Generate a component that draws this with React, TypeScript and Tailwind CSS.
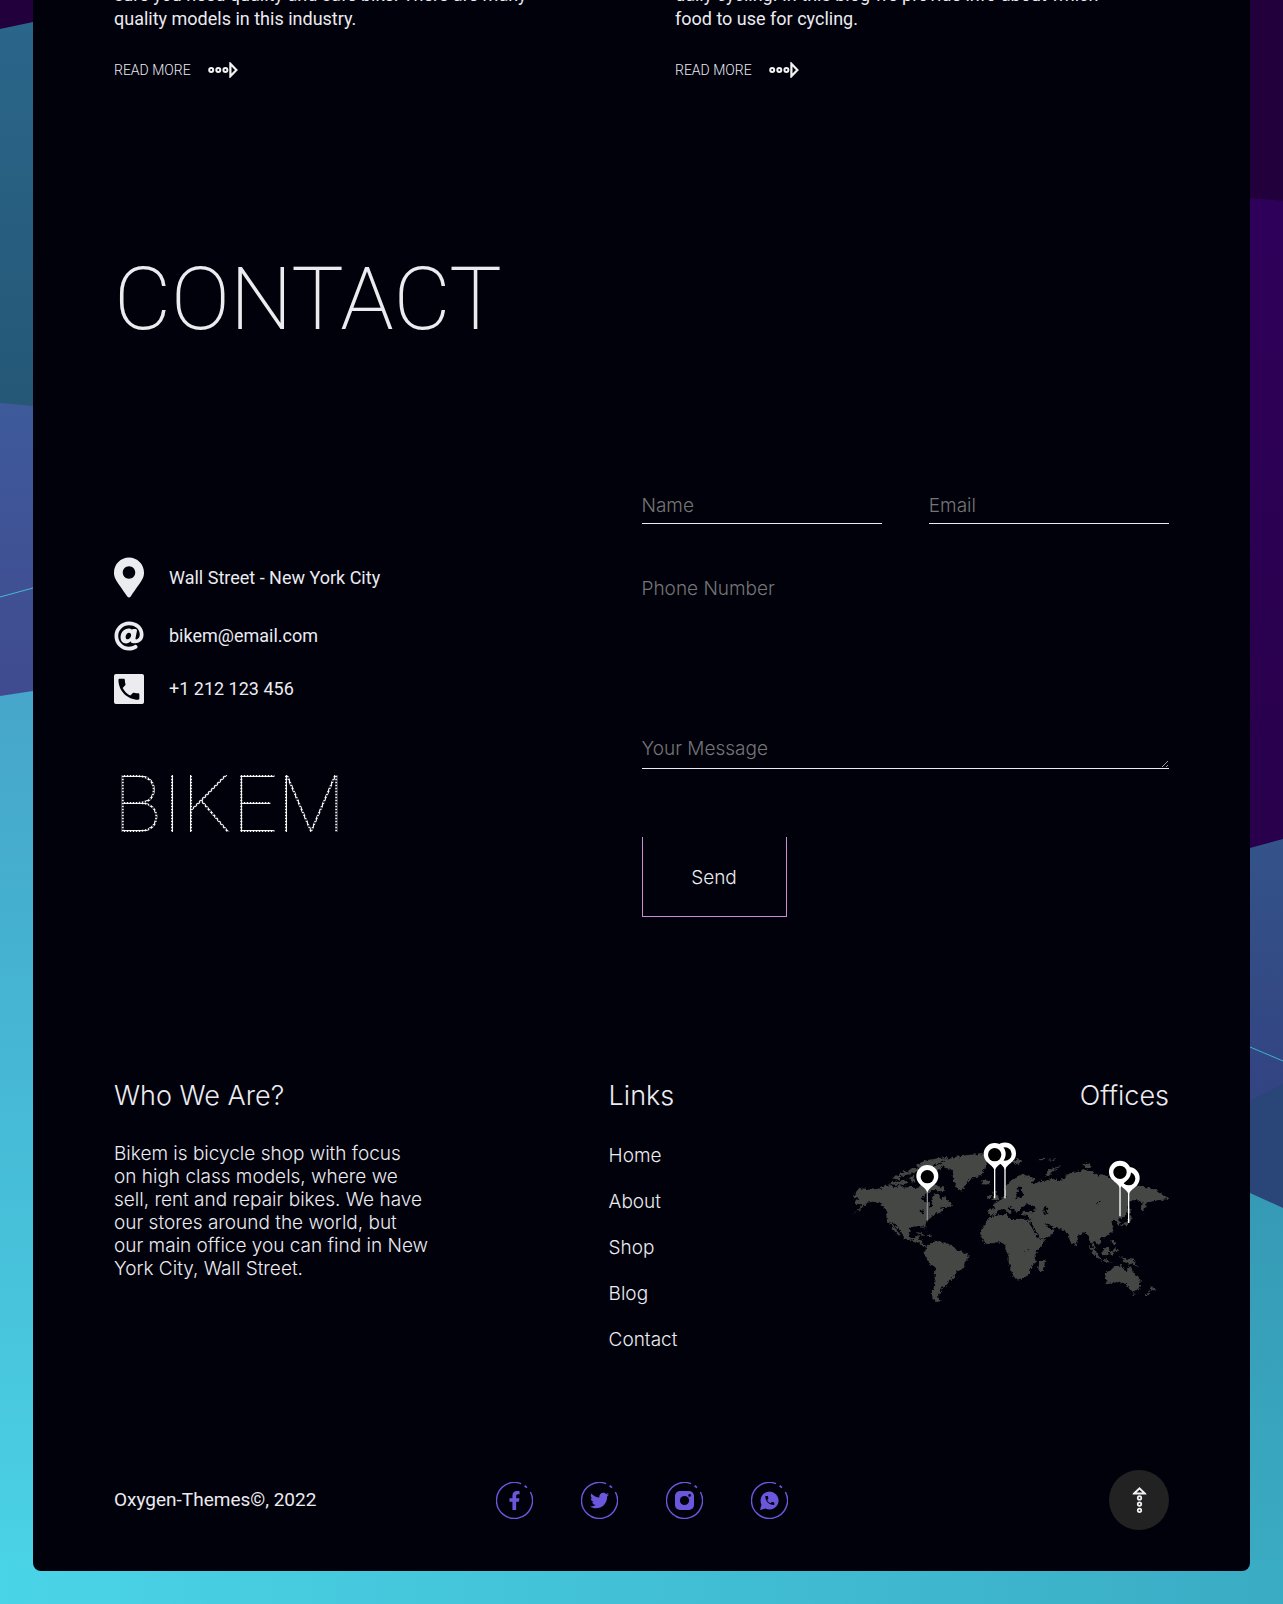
import React from "react";
import { FaAt, FaFacebookF, FaMapMarkerAlt, FaTwitter } from "react-icons/fa";

const HANDSET =
  "M6.62 10.79c1.44 2.83 3.76 5.14 6.59 6.59l2.2-2.2c.27-.27.67-.36 1.02-.24 1.12.37 2.33.57 3.57.57.55 0 1 .45 1 1V20c0 .55-.45 1-1 1-9.39 0-17-7.61-17-17 0-.55.45-1 1-1h3.5c.55 0 1 .45 1 1 0 1.25.2 2.45.57 3.57.11.35.03.74-.25 1.02l-2.2 2.2z";

function Backdrop() {
  return (
    <svg
      className="absolute inset-0 h-full w-full"
      viewBox="0 0 1283 1604"
      preserveAspectRatio="none"
      aria-hidden="true"
    >
      <defs>
        <linearGradient id="teal" x1="0" y1="0" x2="0" y2="1">
          <stop offset="0" stopColor="#2a668a" />
          <stop offset="1" stopColor="#255776" />
        </linearGradient>
        <linearGradient id="indigo" x1="0" y1="0" x2="0" y2="1">
          <stop offset="0" stopColor="#3e5a9a" />
          <stop offset="1" stopColor="#404a8f" />
        </linearGradient>
        <linearGradient id="violet" x1="0" y1="0" x2="0" y2="1">
          <stop offset="0" stopColor="#2f005a" />
          <stop offset="1" stopColor="#28004b" />
        </linearGradient>
        <linearGradient id="blue" x1="0" y1="0" x2="0" y2="1">
          <stop offset="0" stopColor="#34538a" />
          <stop offset="1" stopColor="#324381" />
        </linearGradient>
        <linearGradient id="seaLeft" x1="0" y1="0" x2="0" y2="1">
          <stop offset="0" stopColor="#47a6cb" />
          <stop offset="0.25" stopColor="#45b0d0" />
          <stop offset="1" stopColor="#4ad4e7" />
        </linearGradient>
        <linearGradient id="seaRight" x1="0" y1="0" x2="0" y2="1">
          <stop offset="0" stopColor="#369ab5" />
          <stop offset="1" stopColor="#3aacc4" />
        </linearGradient>
        <linearGradient id="seaFloor" x1="0" y1="0" x2="1" y2="0">
          <stop offset="0" stopColor="#4ad4e7" />
          <stop offset="1" stopColor="#3aacc4" />
        </linearGradient>
      </defs>
      <path d="M0 0H1283V1604H0Z" fill="#21003c" />
      <path d="M0 29L33 22H640V420H0Z" fill="url(#teal)" />
      <path d="M0 403L33 406H640V710H0Z" fill="url(#indigo)" />
      <path d="M0 597L33 588" stroke="#46b8d8" />
      <path d="M0 696L33 691H640V1604H0Z" fill="url(#seaLeft)" />
      <path d="M640 198H1250L1283 201V860H640Z" fill="url(#violet)" />
      <path d="M640 848H1250L1283 839V1110H640Z" fill="url(#blue)" />
      <path d="M1250 1047L1283 1061" stroke="#3fb4cf" />
      <path d="M640 1101H1250L1283 1084V1215H640Z" fill="#2a4577" />
      <path d="M640 1193H1250L1283 1208V1604H640Z" fill="url(#seaRight)" />
      <path d="M0 1560H1283V1604H0Z" fill="url(#seaFloor)" />
    </svg>
  );
}

function BeadArrow({ className }: { className: string }) {
  return (
    <svg viewBox="0 0 30 16" className={className} fill="none" stroke="#f2f2f5" aria-hidden="true">
      <circle cx="3.2" cy="8" r="2" strokeWidth="2" />
      <circle cx="10.3" cy="8" r="2" strokeWidth="2" />
      <circle cx="17.4" cy="8" r="2" strokeWidth="2" />
      <path d="M22.4 1.8L28.4 8L22.4 14.2Z" strokeWidth="2.2" />
    </svg>
  );
}

function Lines({ lines }: { lines: string[] }) {
  return (
    <>
      {lines.map((line) => (
        <span key={line} className="block">
          {line}{" "}
        </span>
      ))}
    </>
  );
}

function BlogTeaser({ lines }: { lines: string[] }) {
  return (
    <article>
      <p className="text-[18px] leading-6">
        <Lines lines={lines} />
      </p>
      <a href="#blog" className="mt-[29px] flex items-center gap-[17px] text-[14px] font-light leading-5">
        READ MORE
        <BeadArrow className="h-4 w-[30px]" />
      </a>
    </article>
  );
}

function Field({ id, label, type, line }: { id: string; label: string; type: string; line: string }) {
  return (
    <div className="min-w-0 flex-1">
      <label htmlFor={id} className="sr-only">
        {label}
      </label>
      <input
        id={id}
        type={type}
        placeholder={label}
        className={`block h-9 w-full border-b bg-transparent font-['Inter'] text-[19px] font-light outline-none placeholder:text-[#757575] ${line}`}
      />
    </div>
  );
}

function SocialRing({ label, children }: { label: string; children: React.ReactNode }) {
  return (
    <a href="#social" aria-label={label}>
      <svg viewBox="0 0 37 37" className="size-[37px] text-[#6a57dc]" aria-hidden="true">
        <g fill="none" stroke="currentColor" strokeWidth="1.4">
          <path d="M25.1 1.7A18 18 0 1 0 34.4 10" />
          <path d="M28.6 3.8L31 5.6" strokeWidth="1.8" />
        </g>
        {children}
      </svg>
    </a>
  );
}

function MapPin({ x, y, end, line = "#ffffff" }: { x: number; y: number; end: number; line?: string }) {
  return (
    <g transform={`translate(${x} ${y})`}>
      <path d={`M0 40V${end}`} stroke={line} strokeWidth="4" />
      <path d="M0 47C-5 36 -14 30 -23 22A33 33 0 1 1 23 22C14 30 5 36 0 47Z" fill="#ffffff" />
      <circle r="20" fill="#000000" />
    </g>
  );
}

function WorldMap() {
  return (
    <svg viewBox="96 245 951 480" className="mt-7 w-full" role="img" aria-label="Map of offices">
      <defs>
        <filter id="coast" x="-2%" y="-2%" width="104%" height="104%">
          <feTurbulence type="fractalNoise" baseFrequency="0.12" numOctaves="3" seed="4" result="noise" />
          <feDisplacementMap in="SourceGraphic" in2="noise" scale="14" xChannelSelector="R" yChannelSelector="G" />
        </filter>
      </defs>
      <g filter="url(#coast)">
        <g fill="#444645">
          <path d="M96 464L122 441L128 432L108 431L103 422L118 419L113 412L99 407L112 390L128 384L150 388L172 386L192 378L212 374L222 381L244 375L252 382L272 379L290 384L304 378L318 386L330 370L338 386L328 396L312 402L304 414L312 424L326 428L332 442L340 430L336 414L342 402L356 404L364 416L374 408L384 422L396 435L386 440L372 439L356 444L374 447L364 456L350 458L342 466L332 472L328 480L318 486L316 500L314 509L308 498L294 500L284 498L270 506L266 518L270 531L284 534L290 526L298 525L294 537L306 541L308 552L320 557L338 550L322 563L308 556L294 545L278 541L252 533L244 516L230 500L222 484L218 490L230 510L242 524L238 528L220 508L212 492L202 484L199 466L204 456L190 440L178 428L160 424L140 427L124 444Z" />
          <path d="M300 380L310 368L326 364L344 368L352 376L370 382L376 394L360 396L350 388L338 390L326 384Z" />
          <path d="M207 372L214 362L236 364L258 360L266 370L250 374L228 373Z" />
          <path d="M216 354L228 345L246 350L238 358Z" />
          <path d="M236 342L252 332L270 338L262 346L246 347Z" />
          <path d="M262 330L284 320L296 328L280 340L268 338Z" />
          <path d="M288 314L318 300L340 296L378 290L390 294L366 302L352 310L334 318L318 326L298 322Z" />
          <path d="M296 334L318 330L314 342L298 346Z" />
          <path d="M344 318L368 306L366 322L350 332L340 328Z" />
          <path d="M268 352L282 346L286 366L272 366Z" />
          <path d="M312 348L330 352L326 362L310 360Z" />
          <path d="M382 424L392 430L396 437L384 434Z" />
          <path d="M366 306L384 296L410 289L448 283L484 282L508 288L500 306L496 326L486 336L488 346L466 350L448 360L436 372L430 388L420 391L410 382L402 364L398 348L404 340L392 326L374 322L366 314Z" />
          <path d="M484 363L500 360L511 366L504 373L486 371Z" />
          <path d="M286 514L304 518L316 524L308 526L292 519ZM322 524L338 526L330 531L320 529Z" />
          <path d="M338 545L356 543L378 548L396 554L406 568L424 572L446 582L444 596L434 606L432 624L410 634L404 648L390 660L380 674L366 680L362 696L354 706L358 718L364 722L350 725L338 716L336 698L342 680L344 650L346 624L330 612L318 594L312 582L318 566L328 550Z" />
          <path d="M504 464L506 446L526 442L518 434L530 424L544 418L552 410L560 412L552 394L558 376L574 360L592 348L606 342L622 346L640 354L646 362L630 366L640 374L660 362L684 360L700 352L716 362L732 354L744 340L768 336L794 328L818 334L826 344L848 342L866 350L880 360L900 362L930 368L958 376L984 382L1010 390L1028 402L1046 416L1030 418L1010 420L996 424L980 426L974 440L968 454L962 446L970 428L954 420L930 420L924 424L926 442L920 462L906 474L896 470L900 488L894 494L884 478L874 484L880 498L876 516L858 528L842 534L844 546L836 554L824 542L818 546L828 564L820 562L808 542L804 528L792 516L776 524L770 540L764 556L752 546L740 516L728 508L704 502L690 496L680 488L674 490L688 504L704 510L690 528L662 536L652 530L640 510L628 490L634 476L620 474L604 470L602 460L612 454L632 456L644 450L630 440L616 446L606 440L600 448L592 458L584 450L570 440L562 442L578 458L572 464L556 448L546 446L530 456L522 466L510 464Z" />
          <path d="M514 418L522 406L520 394L530 392L530 402L540 414L530 420ZM502 410L512 402L514 412L504 416Z" />
          <path d="M576 304L592 296L606 302L590 312ZM654 297L672 295L674 299L656 300ZM682 299L710 297L700 302Z" />
          <path d="M676 346L680 334L696 324L722 318L706 328L692 340L690 348Z" />
          <path d="M786 312L800 309L820 320L804 322Z" />
          <path d="M504 472L528 466L560 460L564 472L584 480L600 474L628 482L640 502L650 522L660 538L678 536L666 558L648 576L644 590L648 606L634 618L630 638L612 654L586 658L576 638L566 608L566 582L556 568L556 552L534 546L500 552L486 534L480 514L492 496Z" />
          <path d="M676 598L672 622L664 634L654 626L658 606Z" />
          <path d="M766 544L772 552L766 558ZM806 556L820 564L836 584L844 598L834 594L818 578Z" />
          <path d="M846 570L862 560L868 564L866 582L852 588L844 582ZM838 598L858 600L880 606L860 606ZM872 568L884 572L878 590L872 584ZM874 536L882 542L888 556L876 550ZM884 562L892 568L886 576L878 566Z" />
          <path d="M898 590L916 594L940 598L952 618L934 610L918 608L910 598Z" />
          <path d="M854 638L872 630L884 618L898 616L908 620L912 630L920 632L928 612L938 630L950 646L962 662L958 682L944 694L928 688L918 672L900 664L880 668L860 672L858 654Z" />
          <path d="M940 698L948 700L942 706ZM990 676L1006 686L996 692ZM992 690L986 704L974 706Z" />
          <path d="M930 464L938 470L926 492L904 498L902 494L922 484ZM920 440L932 446L930 460L924 458ZM964 430L980 426L972 452L964 446Z" />
        </g>
        <g fill="#01010b">
          <path d="M606 438L620 432L644 436L646 446L624 448L608 448Z" />
          <path d="M672 436L682 440L680 452L688 464L676 464L670 450Z" />
          <path d="M588 404L596 390L592 378L604 376L602 392L612 400L604 410L590 414Z" />
          <path d="M562 462L584 466L604 464L628 468L630 476L604 474L590 478L570 472Z" />
          <path d="M298 448L312 452L314 460L306 462ZM842 418L830 428L828 432L840 424Z" />
          <path d="M626 486L634 488L658 530L654 534ZM620 568L630 566L626 572ZM612 576L616 578L614 588Z" />
        </g>
      </g>
      <MapPin x={322} y={349} end={131} line="#8c8c8f" />
      <MapPin x={555} y={281} end={133} />
      <MapPin x={524} y={283} end={131} />
      <MapPin x={926} y={355} end={133} />
      <MapPin x={900} y={336} end={132} />
    </svg>
  );
}

const LINKS = ["Home", "About", "Shop", "Blog", "Contact"];

export default function App() {
  return (
    <div className="relative min-h-screen overflow-hidden pb-8 font-['Roboto',sans-serif] text-[#ebebf0]">
      <Backdrop />
      <main className="relative mx-[33px] rounded-b-lg bg-[#01010b] px-[81px] pb-[41px]">
        <section className="-mt-[17px] grid grid-cols-2 gap-[67px]">
          <BlogTeaser
            lines={["sure you need quality and safe bike. There are many", "quality models in this industry."]}
          />
          <BlogTeaser
            lines={["daily cycling. In this blog we provide info about which", "food to use for cycling."]}
          />
        </section>

        <h2 className="mt-[175px] text-[88px] font-extralight leading-none">CONTACT</h2>

        <section className="mt-[145px] grid grid-cols-2">
          <div className="pt-[69px]">
            <address className="flex flex-col gap-[23px] text-[18px] not-italic leading-6">
              <div className="flex items-center gap-[25px]">
                <FaMapMarkerAlt className="h-[41px] w-[30px]" />
                Wall Street - New York City
              </div>
              <div className="flex items-center gap-[25px]">
                <FaAt className="size-[30px]" />
                bikem@email.com
              </div>
              <div className="flex items-center gap-[25px]">
                <svg viewBox="0 0 31 31" className="size-[30px]" aria-hidden="true">
                  <rect width="31" height="31" rx="2" fill="#ebebf0" />
                  <path d={HANDSET} transform="translate(1 1.4) scale(1.2)" fill="#01010b" />
                </svg>
                +1 212 123 456
              </div>
            </address>
            <p className="mt-[62px] w-fit bg-[radial-gradient(circle,#ffffff_45%,transparent_75%)] bg-[length:3px_3px] bg-clip-text text-[79px] font-thin leading-none text-transparent">
              BIKEM
            </p>
          </div>

          <form onSubmit={(event) => event.preventDefault()}>
            <div className="flex gap-[47px]">
              <Field id="name" label="Name" type="text" line="border-[#ebebf0]" />
              <Field id="email" label="Email" type="email" line="border-[#ebebf0]" />
            </div>
            <div className="mt-[47px]">
              <Field id="phone" label="Phone Number" type="tel" line="border-transparent" />
            </div>
            <label htmlFor="message" className="sr-only">
              Your Message
            </label>
            <textarea
              id="message"
              rows={1}
              placeholder="Your Message"
              className="mt-[124px] block h-[38px] w-full resize border-b border-[#ebebf0] bg-transparent py-1.5 font-['Inter'] text-[19px] font-light leading-6 outline-none placeholder:text-[#757575]"
            />
            <button
              type="submit"
              className="mt-[68px] h-[80px] w-[145px] border border-t-0 border-[#cf8bd3] pt-1 font-['Inter'] text-[19px] font-light"
            >
              Send
            </button>
          </form>
        </section>

        <footer className="mt-[161px] font-['Inter'] font-light">
          <div className="flex justify-between">
            <section className="w-[320px]">
              <h3 className="text-[27px] leading-9">Who We Are?</h3>
              <p className="mt-7 whitespace-nowrap text-[19px] leading-[23px]">
                <Lines
                  lines={[
                    "Bikem is bicycle shop with focus",
                    "on high class models, where we",
                    "sell, rent and repair bikes. We have",
                    "our stores around the world, but",
                    "our main office you can find in New",
                    "York City, Wall Street.",
                  ]}
                />
              </p>
            </section>
            <nav>
              <h3 className="text-[27px] leading-9">Links</h3>
              <ul className="mt-[30px] flex flex-col gap-[22px] text-[19px] leading-6">
                {LINKS.map((link) => (
                  <li key={link}>
                    <a href={`#${link.toLowerCase()}`}>{link}</a>
                  </li>
                ))}
              </ul>
            </nav>
            <section className="w-[317px]">
              <h3 className="text-right text-[27px] leading-9">Offices</h3>
              <WorldMap />
            </section>
          </div>

          <div className="mt-[118px] grid grid-cols-[1fr_auto_1fr] items-center">
            <p className="font-['Roboto'] text-[19px] font-normal">Oxygen-Themes©, 2022</p>
            <div className="flex gap-[48px]">
              <SocialRing label="Facebook">
                <FaFacebookF x="9" y="9" size={19} />
              </SocialRing>
              <SocialRing label="Twitter">
                <FaTwitter x="9" y="9" size={19} />
              </SocialRing>
              <SocialRing label="Instagram">
                <rect x="9" y="9" width="19" height="19" rx="5" fill="currentColor" />
                <circle cx="18.5" cy="18.5" r="4.6" fill="#01010b" />
                <circle cx="23.6" cy="13.4" r="1.3" fill="#01010b" />
              </SocialRing>
              <SocialRing label="WhatsApp">
                <path d="M9 28L10.5 22.6A9 9 0 1 1 14.5 26.6Z" fill="currentColor" />
                <path d={HANDSET} transform="translate(12.8 12.6) scale(0.5)" fill="#01010b" />
              </SocialRing>
            </div>
            <button
              type="button"
              aria-label="Back to top"
              className="flex size-[60px] items-center justify-center justify-self-end rounded-full bg-[#222222]"
            >
              <BeadArrow className="h-3.5 w-[27px] -rotate-90" />
            </button>
          </div>
        </footer>
      </main>
    </div>
  );
}
